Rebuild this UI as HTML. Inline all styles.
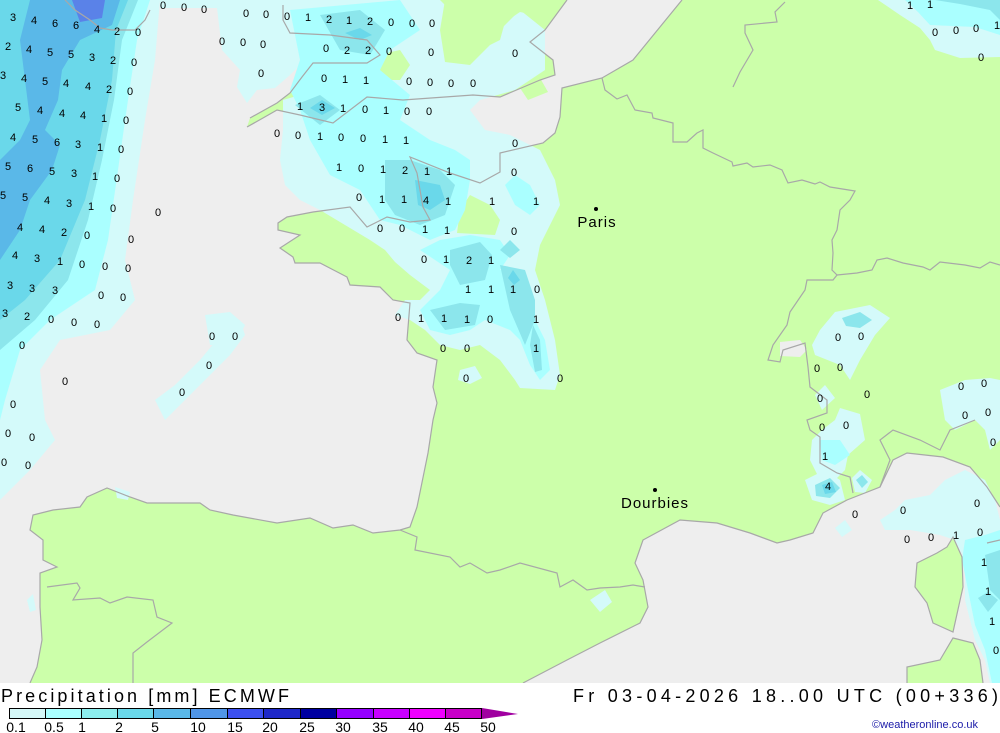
<!DOCTYPE html>
<html><head><meta charset="utf-8"><style>
html,body{margin:0;padding:0;background:#fff;}
svg{display:block;}
.n{font-family:"Liberation Sans",sans-serif;font-size:11px;fill:#000;text-anchor:middle;}
.l{font-family:"Liberation Sans",sans-serif;font-size:15px;fill:#000;text-anchor:middle;letter-spacing:1px;}
.t{font-family:"Liberation Sans",sans-serif;font-size:18px;fill:#000;}
.c{font-family:"Liberation Sans",sans-serif;font-size:14px;fill:#000;text-anchor:middle;}
.b{fill:none;stroke:#a8a8a8;stroke-width:1.2;}
</style></head><body>
<svg width="1000" height="733" viewBox="0 0 1000 733" xmlns="http://www.w3.org/2000/svg">
<rect x="0" y="0" width="1000" height="683" fill="#eeeeee"/>
<polygon fill="#ccffaa" points="283,0 567,0 545,30 530,42 553,60 555,75 540,80 500,97 473,95 403,100 367,97 333,123 300,115 277,110 263,118 247,127 250,118 277,103 290,93 302,77 313,63 367,63 380,55 367,40 330,35 290,33 283,20"/>
<polygon fill="#ccffaa" points="682,0 1000,0 1000,507 987,487 970,467 943,457 907,453 893,460 880,487 847,500 823,513 813,533 790,540 777,543 750,533 717,523 680,520 643,540 635,563 643,580 648,607 640,623 600,643 567,660 523,683 30,683 37,667 42,640 40,607 40,573 57,567 43,560 43,540 30,530 33,515 53,510 80,507 87,497 107,488 130,497 147,503 200,503 210,510 233,515 277,523 310,518 333,528 353,525 373,533 400,530 410,527 417,507 428,453 433,420 437,403 433,387 437,360 417,353 407,340 410,303 393,300 380,287 350,285 347,277 320,263 295,263 293,257 280,248 300,235 278,230 278,223 287,217 313,212 350,207 367,227 387,217 410,222 430,220 423,207 417,173 410,157 450,173 480,183 500,172 500,153 543,143 555,133 560,117 562,88 602,78 633,60"/>
<polygon fill="#eeeeee" points="780,342 800,340 807,350 800,357 780,356"/>
<polygon fill="#ccffaa" points="917,563 915,587 927,603 933,623 953,632 963,587 962,557 953,537 947,547 937,553"/>
<polygon fill="#ccffaa" points="953,638 940,660 907,667 907,683 983,683 980,660 973,643"/>

<polygon fill="#d4fafa" points="0,0 160,0 155,60 145,120 133,200 125,260 135,300 110,330 60,340 40,370 45,420 55,440 30,470 0,500"/>
<polygon fill="#aaffff" points="0,0 150,0 137,40 128,100 118,170 108,240 95,290 50,320 20,350 5,400 0,420"/>
<polygon fill="#8ce6ec" points="0,0 138,0 122,40 114,100 102,160 88,220 68,280 35,320 0,350"/>
<polygon fill="#6ad8ea" points="0,0 128,0 116,30 112,80 100,140 85,200 60,260 25,300 0,320"/>
<polygon fill="#5ab8e8" points="30,0 120,0 112,25 80,40 62,70 58,100 45,130 60,145 52,170 30,200 20,230 0,260 0,160 20,140 30,120 25,80 20,40"/>
<polygon fill="#5a82e8" points="72,0 105,0 102,18 80,22"/>
<polygon fill="#d4fafa" points="205,315 230,312 245,325 235,345 210,345"/>
<polygon fill="#d4fafa" points="155,400 175,385 200,360 225,330 240,320 245,335 230,355 205,380 185,400 165,420"/>
<polygon fill="#d4fafa" points="115,487 130,492 128,500 117,498"/>
<polygon fill="#d4fafa" points="590,600 605,590 612,602 600,612"/>
<polygon fill="#d4fafa" points="27,600 33,594 36,610 30,612"/>

<polygon fill="#d4fafa" points="160,0 440,0 460,20 500,30 520,10 545,30 545,70 515,90 480,100 470,110 485,130 510,135 540,150 555,180 560,205 550,225 540,245 535,270 545,300 555,340 560,375 555,390 520,388 515,380 500,360 480,345 460,350 440,345 425,330 410,320 395,315 405,300 420,300 430,290 410,275 395,262 385,250 370,240 345,225 320,210 300,200 285,185 280,160 283,130 283,100 300,95 300,65 290,75 275,88 257,90 247,103 237,87 240,70 222,50 217,8 160,8"/>
<polygon fill="#ccffaa" points="457,233 460,210 470,195 490,205 500,220 495,235"/>
<polygon fill="#ccffaa" points="520,88 540,78 548,92 528,100"/>
<polygon fill="#ccffaa" points="445,0 540,0 535,15 520,12 505,22 500,40 490,45 470,65 445,62 440,30"/>
<polygon fill="#ccffaa" points="377,55 400,50 410,65 400,80 380,80"/>
<polygon fill="#d4fafa" points="460,370 475,366 482,378 470,384 458,380"/>
<polygon fill="#aaffff" points="290,10 400,0 420,30 390,50 380,70 410,95 400,120 430,140 455,150 470,160 470,180 465,210 455,230 430,240 400,225 380,220 360,190 330,175 310,140 300,110 290,90 300,60"/>
<polygon fill="#aaffff" points="420,250 440,240 470,235 500,240 510,255 500,270 515,270 530,290 535,320 545,340 550,370 540,380 530,365 520,340 510,330 485,320 470,330 450,335 430,330 420,310 440,290 450,270"/>
<polygon fill="#aaffff" points="505,185 515,175 530,185 540,205 530,215 515,205"/>
<polygon fill="#8ce6ec" points="320,15 360,10 385,30 370,55 340,50"/>
<polygon fill="#8ce6ec" points="295,105 320,95 340,110 320,125"/>
<polygon fill="#8ce6ec" points="385,160 410,160 440,170 455,185 445,215 420,225 395,215 385,200"/>
<polygon fill="#8ce6ec" points="450,250 480,242 492,255 485,280 460,285 450,265"/>
<polygon fill="#8ce6ec" points="430,310 460,303 480,305 475,325 445,330"/>
<polygon fill="#8ce6ec" points="500,265 525,270 535,300 535,320 525,345 510,310"/>
<polygon fill="#8ce6ec" points="533,325 540,340 542,370 535,372 530,345"/>
<polygon fill="#8ce6ec" points="510,240 520,250 510,258 500,250"/>
<polygon fill="#6ad8ea" points="345,33 360,28 372,35 360,40"/>
<polygon fill="#6ad8ea" points="310,108 322,100 335,108 322,115"/>
<polygon fill="#6ad8ea" points="415,180 440,185 445,200 430,210 418,205"/>
<polygon fill="#6ad8ea" points="513,270 520,280 514,285 508,278"/>

<polygon fill="#d4fafa" points="878,0 1000,0 1000,57 960,58 935,50 930,40 920,28 900,15"/>
<polygon fill="#aaffff" points="905,0 1000,0 1000,35 975,27 930,25 918,12"/>
<polygon fill="#8ce6ec" points="935,0 1000,0 1000,20 990,10 960,4"/>

<polygon fill="#d4fafa" points="835,312 870,305 890,318 875,335 860,360 850,380 840,365 815,355 812,345 820,330"/>
<polygon fill="#8ce6ec" points="842,318 860,312 872,320 860,328 846,326"/>
<polygon fill="#d4fafa" points="815,395 825,385 835,398 822,410"/>
<polygon fill="#d4fafa" points="840,408 860,414 865,440 848,455 845,470 835,480 820,480 810,460 812,440 822,430 835,420"/>
<polygon fill="#aaffff" points="820,440 840,440 850,455 835,465 822,460"/>
<polygon fill="#d4fafa" points="805,480 825,470 840,480 845,500 830,505 812,500"/>
<polygon fill="#8ce6ec" points="815,485 830,478 840,488 830,498 816,496"/>
<polygon fill="#6ad8ea" points="822,485 832,482 836,492 825,494"/>
<polygon fill="#d4fafa" points="852,478 860,470 872,480 865,493 855,492"/>
<polygon fill="#8ce6ec" points="856,480 862,475 868,482 862,488"/>
<polygon fill="#d4fafa" points="940,390 965,380 990,378 1000,380 1000,440 990,450 985,430 975,420 955,430 945,420"/>
<polygon fill="#d4fafa" points="880,520 895,510 905,500 930,495 945,480 965,470 985,480 995,500 1000,520 1000,683 990,683 985,660 975,640 965,600 965,560 955,540 940,535 910,530 885,530"/>
<polygon fill="#aaffff" points="965,540 985,535 1000,530 1000,683 992,683 985,650 975,625 968,590 962,560"/>
<polygon fill="#8ce6ec" points="985,555 1000,550 1000,600 990,590"/>
<polygon fill="#8ce6ec" points="978,598 988,592 998,600 988,612"/>
<polygon fill="#d4fafa" points="835,528 845,520 852,530 842,537"/>

<polyline class="b" points="247,127 263,118 277,110 300,115 333,123 367,97 403,100 473,95 500,97 540,80 555,75 553,60 530,42 545,30 567,0"/>
<polyline class="b" points="250,118 277,103 290,93 302,77 313,63 367,63 380,55 367,40 330,35 290,33 283,20 283,5"/>
<polyline class="b" points="65,0 75,10 90,20 100,28 112,30 135,30 145,20 150,10"/>
<polyline class="b" points="682,0 633,60 602,78 562,88 560,117 555,133 543,143 500,153 500,172 480,183 450,173 410,157 417,173 423,207 430,220 410,222 387,217 367,227 350,207 313,212 287,217 278,223 278,230 300,235 280,248 293,257 295,263 320,263 347,277 350,285 380,287 393,300 410,303 407,340 417,353 437,360 433,387 437,403 433,420 428,453 417,507 410,527 400,530 373,533 353,525 333,528 310,518 277,523 233,515 210,510 200,503 147,503 130,497 107,488 87,497 80,507 53,510 33,515 30,530 43,540 43,560 57,567 40,573 40,607 42,640 37,667 30,683"/>
<polyline class="b" points="523,683 567,660 600,643 640,623 648,607 643,580 635,563 643,540 680,520 717,523 750,533 777,543 790,540 813,533 823,513 847,500 880,487 893,460 907,453 943,457 970,467 987,487 1000,507"/>
<polygon class="b" points="917,563 915,587 927,603 933,623 953,632 963,587 962,557 953,537 947,547 937,553"/>
<polyline class="b" points="907,683 907,667 940,660 953,638 973,643 980,660 983,683"/>
<polyline class="b" points="987,543 1000,540"/>
<polyline class="b" points="602,78 605,90 617,99 627,95 635,110 652,113 653,118 673,123 673,142 687,142 697,133 703,130 703,148 713,153 732,162 733,166 747,163 753,167 770,165 782,170 788,183 802,180 815,184 820,182 830,187 855,191 850,200 840,210 837,230 832,240 833,253 832,270 837,275 833,280 807,280 805,290 790,312 787,325 773,345 768,360 780,362 783,350 805,343 808,367 810,387 827,400 827,413 807,420 810,430 820,437 820,463 837,473 850,477 853,493"/>
<polyline class="b" points="733,87 740,72 753,50 745,33 745,25 777,22 775,12 785,2"/>
<polyline class="b" points="837,275 857,273 872,270 877,260 887,258 903,263 923,267 930,270 940,262 965,265 980,268 990,262 1000,265"/>
<polyline class="b" points="880,487 890,460 880,440 893,430 920,440 940,450 950,430 975,420"/>
<polyline class="b" points="400,530 417,537 415,550 450,557 460,567 470,563 487,573 500,570 520,563 557,573 560,587 573,580 587,590 600,588 620,587 633,585 645,587"/>
<polyline class="b" points="47,587 77,583 80,588 73,600 100,598 110,603 127,597 153,600 157,617 172,623 147,642 133,653 133,683"/>

<g class="n">
<text x="13" y="21">3</text><text x="34" y="24">4</text><text x="55" y="27">6</text><text x="76" y="29">6</text><text x="97" y="33">4</text><text x="117" y="35">2</text><text x="138" y="36">0</text>
<text x="8" y="50">2</text><text x="29" y="53">4</text><text x="50" y="56">5</text><text x="71" y="58">5</text><text x="92" y="61">3</text><text x="113" y="64">2</text><text x="134" y="66">0</text>
<text x="3" y="79">3</text><text x="24" y="82">4</text><text x="45" y="85">5</text><text x="66" y="87">4</text><text x="88" y="90">4</text><text x="109" y="93">2</text><text x="130" y="95">0</text>
<text x="18" y="111">5</text><text x="40" y="114">4</text><text x="62" y="117">4</text><text x="83" y="119">4</text><text x="104" y="122">1</text><text x="126" y="124">0</text>
<text x="13" y="141">4</text><text x="35" y="143">5</text><text x="57" y="146">6</text><text x="78" y="148">3</text><text x="100" y="151">1</text><text x="121" y="153">0</text>
<text x="8" y="170">5</text><text x="30" y="172">6</text><text x="52" y="175">5</text><text x="74" y="177">3</text><text x="95" y="180">1</text><text x="117" y="182">0</text>
<text x="3" y="199">5</text><text x="25" y="201">5</text><text x="47" y="204">4</text><text x="69" y="207">3</text><text x="91" y="210">1</text><text x="113" y="212">0</text><text x="158" y="216">0</text>
<text x="20" y="231">4</text><text x="42" y="233">4</text><text x="64" y="236">2</text><text x="87" y="239">0</text><text x="131" y="243">0</text>
<text x="15" y="259">4</text><text x="37" y="262">3</text><text x="60" y="265">1</text><text x="82" y="268">0</text><text x="105" y="270">0</text><text x="128" y="272">0</text>
<text x="10" y="289">3</text><text x="32" y="292">3</text><text x="55" y="294">3</text><text x="101" y="299">0</text><text x="123" y="301">0</text>
<text x="5" y="317">3</text><text x="27" y="320">2</text><text x="51" y="323">0</text><text x="74" y="326">0</text><text x="97" y="328">0</text><text x="22" y="349">0</text>
<text x="65" y="385">0</text><text x="13" y="408">0</text><text x="8" y="437">0</text><text x="32" y="441">0</text><text x="4" y="466">0</text><text x="28" y="469">0</text>
<text x="212" y="340">0</text><text x="235" y="340">0</text><text x="209" y="369">0</text><text x="182" y="396">0</text>
<text x="163" y="9">0</text><text x="184" y="11">0</text><text x="204" y="13">0</text><text x="246" y="17">0</text><text x="266" y="18">0</text><text x="287" y="20">0</text><text x="308" y="21">1</text><text x="329" y="23">2</text><text x="349" y="24">1</text><text x="370" y="25">2</text><text x="391" y="26">0</text><text x="412" y="27">0</text><text x="432" y="27">0</text>
<text x="222" y="45">0</text><text x="243" y="46">0</text><text x="263" y="48">0</text><text x="326" y="52">0</text><text x="347" y="54">2</text><text x="368" y="54">2</text><text x="389" y="55">0</text><text x="431" y="56">0</text><text x="515" y="57">0</text>
<text x="261" y="77">0</text><text x="324" y="82">0</text><text x="345" y="83">1</text><text x="366" y="84">1</text><text x="409" y="85">0</text><text x="430" y="86">0</text><text x="451" y="87">0</text><text x="473" y="87">0</text>
<text x="300" y="110">1</text><text x="322" y="111">3</text><text x="343" y="112">1</text><text x="365" y="113">0</text><text x="386" y="114">1</text><text x="407" y="115">0</text><text x="429" y="115">0</text>
<text x="277" y="137">0</text><text x="298" y="139">0</text><text x="320" y="140">1</text><text x="341" y="141">0</text><text x="363" y="142">0</text><text x="385" y="143">1</text><text x="406" y="144">1</text><text x="515" y="147">0</text>
<text x="339" y="171">1</text><text x="361" y="172">0</text><text x="383" y="173">1</text><text x="405" y="174">2</text><text x="427" y="175">1</text><text x="449" y="175">1</text><text x="514" y="176">0</text>
<text x="359" y="201">0</text><text x="382" y="203">1</text><text x="404" y="203">1</text><text x="426" y="204">4</text><text x="448" y="205">1</text><text x="492" y="205">1</text><text x="536" y="205">1</text>
<text x="380" y="232">0</text><text x="402" y="232">0</text><text x="425" y="233">1</text><text x="447" y="234">1</text><text x="514" y="235">0</text>
<text x="424" y="263">0</text><text x="446" y="263">1</text><text x="469" y="264">2</text><text x="491" y="264">1</text>
<text x="468" y="293">1</text><text x="491" y="293">1</text><text x="513" y="293">1</text><text x="537" y="293">0</text>
<text x="398" y="321">0</text><text x="421" y="322">1</text><text x="444" y="322">1</text><text x="467" y="323">1</text><text x="490" y="323">0</text><text x="536" y="323">1</text>
<text x="443" y="352">0</text><text x="467" y="352">0</text><text x="536" y="352">1</text><text x="466" y="382">0</text><text x="560" y="382">0</text>
<text x="910" y="9">1</text><text x="930" y="8">1</text><text x="935" y="36">0</text><text x="956" y="34">0</text><text x="976" y="32">0</text><text x="997" y="29">1</text><text x="981" y="61">0</text>
<text x="838" y="341">0</text><text x="861" y="340">0</text><text x="817" y="372">0</text><text x="840" y="371">0</text><text x="867" y="398">0</text><text x="820" y="402">0</text><text x="822" y="431">0</text><text x="846" y="429">0</text><text x="825" y="460">1</text><text x="828" y="490">4</text><text x="855" y="518">0</text>
<text x="961" y="390">0</text><text x="984" y="387">0</text><text x="965" y="419">0</text><text x="988" y="416">0</text><text x="993" y="446">0</text>
<text x="903" y="514">0</text><text x="907" y="543">0</text><text x="931" y="541">0</text><text x="956" y="539">1</text><text x="980" y="536">0</text><text x="977" y="507">0</text>
<text x="984" y="566">1</text><text x="988" y="595">1</text><text x="992" y="625">1</text><text x="996" y="654">0</text>
</g>
<circle cx="596" cy="209" r="2" fill="#000"/>
<text class="l" x="597" y="227">Paris</text>
<circle cx="655" cy="490" r="2" fill="#000"/>
<text class="l" x="655" y="508">Dourbies</text>

<rect x="0" y="683" width="1000" height="50" fill="#fff"/>
<text class="t" x="1" y="702" textLength="288" lengthAdjust="spacing">Precipitation [mm] ECMWF</text>
<text class="t" x="573" y="702" textLength="425" lengthAdjust="spacing">Fr 03-04-2026 18..00 UTC (00+336)</text>
<g stroke="#000" stroke-width="1">
<rect x="9.5" y="708.5" width="36" height="10" fill="#d4f7f7"/>
<rect x="45.5" y="708.5" width="36" height="10" fill="#aaffff"/>
<rect x="81.5" y="708.5" width="36" height="10" fill="#8ceeee"/>
<rect x="117.5" y="708.5" width="36" height="10" fill="#6ad8ea"/>
<rect x="153.5" y="708.5" width="37" height="10" fill="#5ab8e8"/>
<rect x="190.5" y="708.5" width="37" height="10" fill="#5096e8"/>
<rect x="227.5" y="708.5" width="36" height="10" fill="#3c50f0"/>
<rect x="263.5" y="708.5" width="37" height="10" fill="#1e28c8"/>
<rect x="300.5" y="708.5" width="36" height="10" fill="#0000a0"/>
<rect x="336.5" y="708.5" width="37" height="10" fill="#9600ff"/>
<rect x="373.5" y="708.5" width="36" height="10" fill="#c800ff"/>
<rect x="409.5" y="708.5" width="36" height="10" fill="#f000ff"/>
<rect x="445.5" y="708.5" width="36" height="10" fill="#c800c8"/>
</g>
<polygon points="482,708 482,719 518,714" fill="#a000a0"/>
<g class="c">
<text x="16" y="732">0.1</text><text x="54" y="732">0.5</text><text x="82" y="732">1</text><text x="119" y="732">2</text><text x="155" y="732">5</text><text x="198" y="732">10</text><text x="235" y="732">15</text><text x="270" y="732">20</text><text x="307" y="732">25</text><text x="343" y="732">30</text><text x="380" y="732">35</text><text x="416" y="732">40</text><text x="452" y="732">45</text><text x="488" y="732">50</text>
</g>
<text x="978" y="728" font-family="Liberation Sans,sans-serif" font-size="11" fill="#1a1aa8" text-anchor="end">©weatheronline.co.uk</text>
</svg>
</body></html>
